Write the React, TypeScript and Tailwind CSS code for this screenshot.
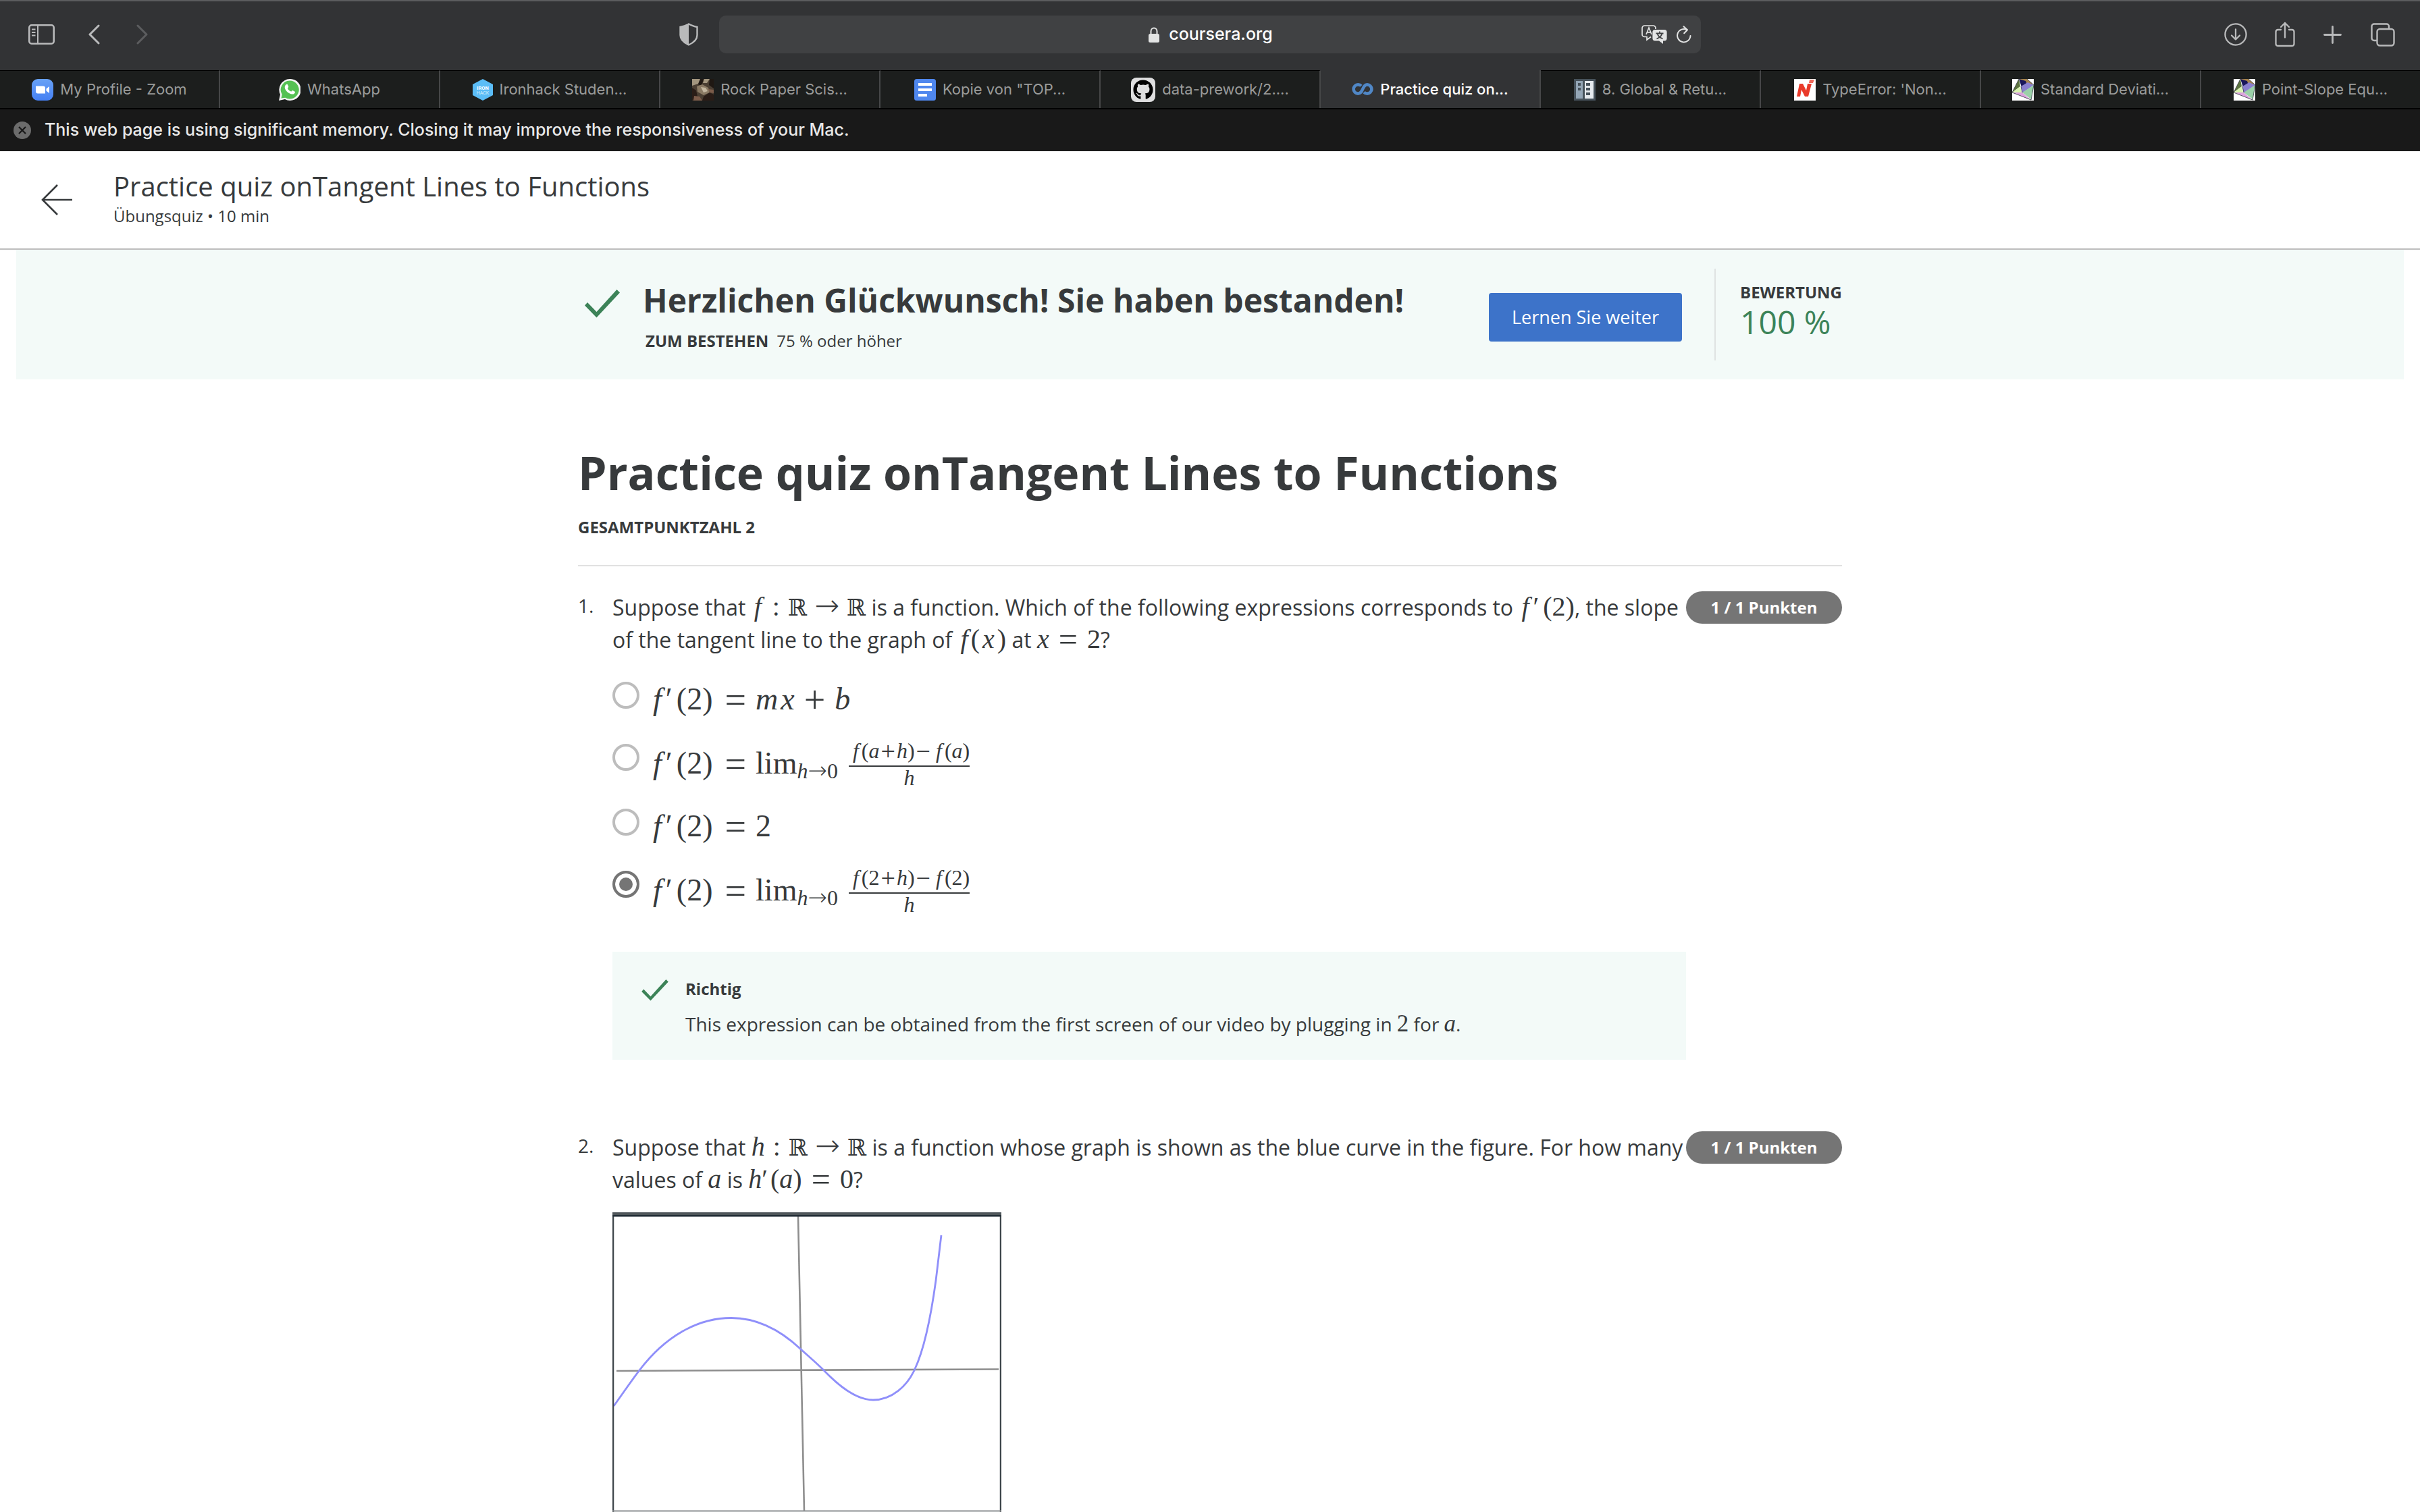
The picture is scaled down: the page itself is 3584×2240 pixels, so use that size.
import type { ReactNode } from "react";
import { FaGithub } from "react-icons/fa";

const serif = "font-['Liberation_Serif','DejaVu_Serif',serif]";

/* ---------- browser chrome ---------- */

function SidebarIcon() {
  return (
    <svg viewBox="0 0 39 30" className="h-[30px] w-[39px]" fill="none" stroke="#b9babb" strokeWidth="2.6">
      <rect x="1.3" y="1.3" width="36.4" height="27.4" rx="3.5" />
      <path d="M14 1v28M5 7.5h5.500M5 12h5.500M5 16.500h5.500" strokeWidth="2" />
    </svg>
  );
}

function Chevron({ forward }: { forward?: boolean }) {
  return (
    <svg
      viewBox="0 0 17 30"
      className="h-[30px] w-[17px]"
      fill="none"
      stroke={forward ? "#5c5d5f" : "#b9babb"}
      strokeWidth="3"
      strokeLinecap="round"
      strokeLinejoin="round"
    >
      <path d={forward ? "M2 2l13 13L2 28" : "M15 2L2 15l13 13"} />
    </svg>
  );
}

function ShieldIcon() {
  return (
    <svg viewBox="0 0 28 34" className="h-[34px] w-7">
      <path d="M14 1.500C10 4 6 5 1.500 6v12c0 6 5 11 12.500 14.500z" fill="#b9babb" />
      <path d="M14 1.500C18 4 22 5 26.500 6v12c0 6-5 11-12.500 14.500C6.500 29 1.500 24 1.500 18V6C6 5 10 4 14 1.500z" fill="none" stroke="#b9babb" strokeWidth="2.4" />
    </svg>
  );
}

function LockIcon() {
  return (
    <svg viewBox="0 0 16 23" className="h-[23px] w-4">
      <rect x="0" y="10" width="16" height="13" rx="2.5" fill="#e3e4e4" />
      <path d="M3.500 11V6.500a4.500 5 0 0 1 9 0V11" fill="none" stroke="#e3e4e4" strokeWidth="2" />
    </svg>
  );
}

function TranslateIcon() {
  return (
    <svg viewBox="0 0 38 28" className="h-7 w-[38px]" fill="none">
      <path d="M14 17.500l-6 4.500v-4.500H4.500A3.500 3.500 0 0 1 1 14V4.500A3.500 3.500 0 0 1 4.500 1h13A3.500 3.500 0 0 1 21 4.500V6" stroke="#e3e4e4" strokeWidth="1.700" />
      <path d="M7 14l4-10 4 10M8.300 10.800h5.400" stroke="#e3e4e4" strokeWidth="1.700" />
      <path d="M20 7h14a3.600 3.600 0 0 1 3.600 3.600v9.200a3.600 3.600 0 0 1-3.600 3.600h-2V28l-6-4.600h-6a3.600 3.600 0 0 1-3.600-3.600v-9.200A3.600 3.600 0 0 1 20 7z" fill="#e3e4e4" />
      <path d="M27 9.500v2.500M21.500 12.500h11M30.500 12.500c-1 4-4 6.500-8 8M23.500 12.500c1 4 4 6.500 8 8" stroke="#404143" strokeWidth="1.800" />
    </svg>
  );
}

function ReloadIcon() {
  return (
    <svg viewBox="0 0 22 26" className="h-[26px] w-[22px]" fill="none" stroke="#e3e4e4" strokeWidth="2" strokeLinecap="round" strokeLinejoin="round">
      <path d="M20.500 15A9.700 9.700 0 1 1 15.500 6.200M10.500 1.200L16 6.200l-4.800 5" />
    </svg>
  );
}

function DownloadIcon() {
  return (
    <svg viewBox="0 0 34 34" className="h-[34px] w-[34px]" fill="none" stroke="#b9babb" strokeWidth="2.300" strokeLinecap="round" strokeLinejoin="round">
      <circle cx="17" cy="17" r="15.600" />
      <path d="M17 9.500V24M11 18.500l6 6 6-6" />
    </svg>
  );
}

function ShareIcon() {
  return (
    <svg viewBox="0 0 30 38" className="h-[38px] w-[30px]" fill="none" stroke="#b9babb" strokeWidth="2.300" strokeLinecap="round" strokeLinejoin="round">
      <path d="M9 12H4.500A3 3 0 0 0 1.500 15v18a3.200 3.200 0 0 0 3 3h21a3.200 3.200 0 0 0 3-3V15a3 3 0 0 0-3-3H21" />
      <path d="M15 23.500V2M9 8l6-6 6 6" />
    </svg>
  );
}

function PlusIcon() {
  return (
    <svg viewBox="0 0 27 27" className="h-[27px] w-[27px]" stroke="#b9babb" strokeWidth="2.800" strokeLinecap="round">
      <path d="M13.500 1.500v24M1.500 13.500h24" />
    </svg>
  );
}

function TabsIcon() {
  return (
    <svg viewBox="0 0 36 35" className="h-[35px] w-9" fill="none" stroke="#b9babb" strokeWidth="2.400">
      <rect x="9.500" y="9" width="25" height="24.500" rx="4" />
      <path d="M9.500 26H5a3.500 3.500 0 0 1-3.500-3.500V5A3.500 3.500 0 0 1 5 1.500h18.500A3.500 3.500 0 0 1 27 5v4" />
    </svg>
  );
}

/* ---------- favicons ---------- */

const zoomIcon = (
  <svg viewBox="0 0 32 32" className="h-8 w-8">
    <defs>
      <linearGradient id="zoomBlue" x1="0" y1="0" x2="0" y2="1">
        <stop offset="0" stopColor="#68a1f5" />
        <stop offset="1" stopColor="#4580f3" />
      </linearGradient>
    </defs>
    <rect width="32" height="32" rx="9" fill="url(#zoomBlue)" />
    <path d="M6 10.500h11a3 3 0 0 1 3 3v8H9a3 3 0 0 1-3-3zM21.500 14.500l4.500-3.500v10l-4.500-3.500z" fill="#fff" />
  </svg>
);

const whatsappIcon = (
  <svg viewBox="0 0 32 32" className="h-8 w-8">
    <path d="M16 0a16 16 0 1 1-7 30L0 32l2-9A16 16 0 0 1 16 0z" fill="#f4f4f4" />
    <path d="M16 2.500a13.500 13.500 0 1 1-6.500 25.200L3.500 28.500l1.200-5.500A13.500 13.500 0 0 1 16 2.500z" fill="#55c153" />
    <path d="M10.500 8.500c1-1 2.300-.8 2.800.4l1 2.500c.2.600-1.300 2-1.300 2.500.8 2 2.700 3.800 5 4.700.7.200 1.700-1.900 2.500-1.600l2.800 1.400c1 .6.700 2-.3 3-1.800 1.700-4.500 1.500-7.500-.1-3-1.700-5.500-4.300-6.500-7.400-.6-2.200-.1-4 1.500-5.400z" fill="#fff" />
  </svg>
);

const ironhackIcon = (
  <svg viewBox="0 0 30 32" className="h-8 w-[30px]">
    <path d="M15 0l15 8v16l-15 8-15-8V8z" fill="#5bbdf7" />
    <text x="15" y="15.500" textAnchor="middle" fontSize="7.500" fontWeight="700" fill="#fff" fontFamily="Roboto, sans-serif">IRON</text>
    <text x="15" y="22.500" textAnchor="middle" fontSize="7" fill="#d9effd" fontFamily="Roboto, sans-serif">HACK</text>
  </svg>
);

const photoIcon = (
  <svg viewBox="0 0 32 32" className="h-8 w-8">
    <rect width="32" height="32" fill="#4b3f33" />
    <path d="M0 0h12l-3 7-9 3zM18 0h8l-4 6h-6z" fill="#a3967f" />
    <path d="M12 0h5l-3 10-5-2zM26 0h6v14l-7-5z" fill="#1f1813" />
    <path d="M7 11l8-3 9 5 2 7-9 4-9-5z" fill="#8a7a64" />
    <path d="M13 12l7 1 3 5-6 2z" fill="#c4b7a0" />
    <path d="M0 13l6 4 2 9-8 6zM17 26l9-6 6 3v9H15z" fill="#2a1d17" />
    <path d="M3 25l8 1 4 6H2zM24 15l8 1v5l-6-1z" fill="#7c5c4a" />
  </svg>
);

const docsIcon = (
  <svg viewBox="0 0 32 32" className="h-8 w-8">
    <rect width="32" height="32" rx="3.500" fill="#4f87ee" />
    <path d="M6 6h20v4H6zM6 14h20v4H6zM6 22h13v4H6z" fill="#fff" />
  </svg>
);

const githubIcon = (
  <span className="flex h-9 w-9 items-center justify-center rounded-lg bg-[#dededf]">
    <FaGithub className="h-[30px] w-[30px] text-black" />
  </span>
);

const courseraIcon = (
  <svg viewBox="0 0 32 18" className="h-[18px] w-8" fill="none" stroke="#5087c6" strokeWidth="4.600">
    <path d="M14 4.300C12.800 3 11.200 2.400 9.200 2.400a6.600 6.600 0 0 0 0 13.200c8 0 6-13.200 13.600-13.200a6.600 6.600 0 0 1 0 13.200c-2 0-3.600-.7-4.800-2" />
  </svg>
);

const booksIcon = (
  <svg viewBox="0 0 32 32" className="h-8 w-8">
    <rect width="32" height="32" fill="#47525b" />
    <path d="M3 3h10v26H3z" fill="#93a5b5" />
    <path d="M16 3h13v26H16z" fill="#e6eaee" />
    <path d="M6 6h4v4H6zM6 13h4v4H6zM18 6h6v4h-6zM18 13h6v4h-6zM18 20h6v4h-6z" fill="#47525b" />
  </svg>
);

const netIcon = (
  <svg viewBox="0 0 32 32" className="h-8 w-8">
    <rect width="32" height="32" fill="#fff" />
    <path d="M4 26L8 7h5l5 10 2-10h6l-5 19h-5l-5-10-2 10z" fill="#e93a2a" />
    <path d="M23 1h7l-2 5h-6z" fill="#ee6a5c" />
  </svg>
);

const gemIcon = (
  <svg viewBox="0 0 32 32" className="h-8 w-8">
    <rect width="32" height="32" fill="#fff" />
    <path d="M10 0h12l9 8-12 0z" fill="#a5824b" />
    <path d="M10 0l10 3 2 6-8 3z" fill="#19165a" />
    <path d="M10 0L0 20l12-9z" fill="#5d7440" />
    <path d="M0 20l12-9 2 9z" fill="#d9f5b0" />
    <path d="M13 11l10-6 9 4-17 12z" fill="#8a80cf" />
    <path d="M32 9l-4 21-13-10z" fill="#9ad0a8" />
    <path d="M0 20h15l13 11z" fill="#dba4dd" />
    <path d="M10 0L0 20l28 11 4-22-10-9M13 11l2 9" fill="none" stroke="#2f3440" strokeWidth=".8" />
  </svg>
);

const tabs: { label: string; icon: ReactNode; active?: boolean }[] = [
  { label: "My Profile - Zoom", icon: zoomIcon },
  { label: "WhatsApp", icon: whatsappIcon },
  { label: "Ironhack Studen...", icon: ironhackIcon },
  { label: "Rock Paper Scis...", icon: photoIcon },
  { label: 'Kopie von "TOP...', icon: docsIcon },
  { label: "data-prework/2....", icon: githubIcon },
  { label: "Practice quiz on...", icon: courseraIcon, active: true },
  { label: "8. Global & Retu...", icon: booksIcon },
  { label: "TypeError: 'Non...", icon: netIcon },
  { label: "Standard Deviati...", icon: gemIcon },
  { label: "Point-Slope Equ...", icon: gemIcon },
];

function BrowserChrome() {
  return (
    <header className="font-[Inter,sans-serif]">
      <div className="grid h-[104px] grid-cols-[1fr_1454px_1fr] items-center border-t-2 border-[#5b5c5e] bg-[#323335] pb-1">
        <div className="flex items-center pr-[31px] pl-[42px]">
          <button aria-label="Sidebar"><SidebarIcon /></button>
          <button aria-label="Back" className="ml-[50px]"><Chevron /></button>
          <button aria-label="Forward" className="ml-[54px]"><Chevron forward /></button>
          <button aria-label="Privacy report" className="ml-auto"><ShieldIcon /></button>
        </div>
        <div className="flex h-14 items-center rounded-[10px] bg-[#404143] pr-[14px]">
          <div className="w-[90px]" />
          <div className="flex flex-1 items-center justify-center gap-[14px]">
            <LockIcon />
            <span className="text-[25px] font-medium text-white">coursera.org</span>
          </div>
          <button aria-label="Translate"><TranslateIcon /></button>
          <button aria-label="Reload" className="ml-[14px]"><ReloadIcon /></button>
        </div>
        <div className="flex items-center justify-end pr-[37px]">
          <button aria-label="Downloads"><DownloadIcon /></button>
          <button aria-label="Share" className="ml-[41px]"><ShareIcon /></button>
          <button aria-label="New tab" className="ml-[42px]"><PlusIcon /></button>
          <button aria-label="Tab overview" className="ml-[43px]"><TabsIcon /></button>
        </div>
      </div>
      <nav className="flex h-[58px] border-b-2 border-black bg-[#1c1e1d]">
        {tabs.map((tab) => (
          <button
            key={tab.label}
            className={
              tab.active
                ? "flex flex-1 items-center justify-center gap-[10px] border-r-2 border-[#464748] bg-[#323335] text-[22px] font-medium whitespace-nowrap text-white"
                : "flex flex-1 items-center justify-center gap-[10px] border-t border-r-2 border-t-black border-r-[#464748] text-[22px] whitespace-nowrap text-[#9b9c9b] last:border-r-0"
            }
          >
            {tab.icon}
            <span>{tab.label}</span>
          </button>
        ))}
      </nav>
      <div className="flex h-[62px] items-center gap-5 bg-[#191919] pl-5">
        <button aria-label="Dismiss">
          <svg viewBox="0 0 26 26" className="h-[26px] w-[26px]">
            <circle cx="13" cy="13" r="13" fill="#6c6c6c" />
            <path d="M8 8l10 10M18 8L8 18" stroke="#191919" strokeWidth="2.200" />
          </svg>
        </button>
        <p className="text-[25px] font-medium text-[#e8e8e8]">
          This web page is using significant memory. Closing it may improve the responsiveness of your Mac.
        </p>
      </div>
    </header>
  );
}

/* ---------- math ---------- */

function M({ children }: { children: ReactNode }) {
  return <span className={`${serif} text-[40px] leading-none whitespace-nowrap`}>{children}</span>;
}

/* Relation or sum sign inside running text. */
function InlineOp({ children }: { children: ReactNode }) {
  return <span className="mx-3.5 align-[-4px] text-[50px] leading-0">{children}</span>;
}

/* Relation or sum sign in an answer. */
function DisplayOp({ children }: { children: ReactNode }) {
  return <span className="mx-3.5 align-[-5px] text-[56px] leading-0">{children}</span>;
}

/* Sum sign inside a fraction. */
function SmallOp({ children }: { children: ReactNode }) {
  return <span className="mx-[2px] align-[-3px] text-[38px] leading-0">{children}</span>;
}

function FPrime2() {
  return (
    <>
      <i className="mr-1.5">f</i>′<span className="ml-1.5">(2)</span>
    </>
  );
}

function RealsToReals() {
  return (
    <>
      <span className="mx-3">:</span>
      <span className="font-['DejaVu_Serif',serif] text-[34px] leading-0">ℝ</span>
      <span className="mx-[11px] font-['DejaVu_Sans',sans-serif] text-[44px] leading-0 font-extralight">→</span>
      <span className="font-['DejaVu_Serif',serif] text-[34px] leading-0">ℝ</span>
    </>
  );
}

function Option({ id, checked, tall, children }: { id: string; checked?: boolean; tall?: boolean; children: ReactNode }) {
  return (
    <div className={tall ? "flex h-24 items-start" : "flex h-[92px] items-start"}>
      <input
        type="radio"
        id={id}
        name="q1"
        defaultChecked={checked}
        className="mt-1 h-10 w-10 shrink-0 appearance-none rounded-full border-4 border-[#bdbdbd] bg-white checked:border-[#757575] checked:bg-[#757575] checked:shadow-[inset_0_0_0_6px_white]"
      />
      <label htmlFor={id} className={`${serif} ml-5 block text-[46px] leading-[60px] whitespace-nowrap`}>
        <FPrime2 />
        <span className="ml-1" />
        <DisplayOp>=</DisplayOp>
        {children}
      </label>
    </div>
  );
}

function Limit({ point }: { point: ReactNode }) {
  return (
    <>
      lim
      <sub className="bottom-[-7px] text-[32px]">
        <i>h</i>
        <span className="font-['DejaVu_Sans',sans-serif] text-[34px] leading-0 font-extralight">→</span>0
      </sub>
      <span className="ml-4 inline-flex flex-col items-stretch text-center align-middle text-[32px]">
        <span className="border-b-2 border-[#373a3c] pb-2 leading-7">
          <i className="mr-1 ml-1.5">f</i>({point}
          <SmallOp>+</SmallOp>
          <i>h</i>)<SmallOp>−</SmallOp>
          <i className="mr-1 ml-1.5">f</i>({point})
        </span>
        <span className="pb-1 leading-8">
          <i>h</i>
        </span>
      </span>
    </>
  );
}

/* ---------- quiz ---------- */

function Check({ className }: { className: string }) {
  return (
    <svg viewBox="0 0 52 42" className={className}>
      <path d="M0 23.500L4 19l13.500 14L47.500 0l4.500 4.500L17.500 41.500z" fill="#3c8358" />
    </svg>
  );
}

function Question({ number, prompt, children }: { number: number; prompt: ReactNode; children: ReactNode }) {
  return (
    <li className="flex items-start">
      <span className="w-[51px] shrink-0 text-[28px] leading-[42px]">{number}.</span>
      <div className="min-w-0 flex-1">
        <p className="text-[32px] leading-[48px]">{prompt}</p>
        {children}
      </div>
      <span className="flex h-12 w-[231px] shrink-0 items-center justify-center rounded-full bg-[#757575] text-[24px] font-bold text-white">
        1 / 1 Punkten
      </span>
    </li>
  );
}

function Graph() {
  return (
    <svg viewBox="0 0 576 444" className="mt-6 block h-[444px] w-[576px]" fill="none" role="img" aria-label="Graph of h">
      <path d="M275 6L284 443" stroke="#8e8e8e" strokeWidth="2.600" />
      <path d="M6 235L572 232.500" stroke="#8e8e8e" strokeWidth="2.600" />
      <path
        d="M2 287C15 269 27 251 40 234C78 184 126 156.500 176 156.500C214 156.500 248 174 278 202C290 213 300 221 312 233C334 256 360 278 386 278C414 278 437 257 448 232C462 202 472 152 479 101L487 34"
        stroke="#8f8ffa"
        strokeWidth="2.800"
      />
      <path d="M1 0V444M575 0V444" stroke="#3c4449" strokeWidth="2.500" />
      <path d="M0 442.500H576" stroke="#8a8e90" strokeWidth="2" />
      <rect width="576" height="4" fill="#4f565a" />
      <rect y="4" width="576" height="2.500" fill="#222d36" />
    </svg>
  );
}

export default function App() {
  return (
    <div className="h-screen overflow-hidden bg-white font-['Open_Sans',sans-serif] text-[#373a3c]">
      <BrowserChrome />

      <div className="flex h-[146px] items-center border-b-2 border-[#bdbdbd] pl-[61px]">
        <button aria-label="Zurück">
          <svg viewBox="0 0 46 46" className="h-[46px] w-[46px]" fill="none" stroke="#373a3c" strokeWidth="2.600">
            <path d="M46 23H2M24 1L2 23l22 22" />
          </svg>
        </button>
        <div className="ml-[61px]">
          <p className="text-[40px] leading-[48px]">Practice quiz onTangent Lines to Functions</p>
          <p className="text-[24px] leading-10">Übungsquiz • 10 min</p>
        </div>
      </div>

      <section className="mx-6 bg-[#f3faf8]">
        <div className="mx-auto flex h-48 w-full max-w-[1872px] items-start">
          <Check className="mt-[59px] ml-[10px] h-[42px] w-[52px]" />
          <div className="mt-[43px] ml-[34px]">
            <h2 className="text-[48px] leading-[64px] font-bold">Herzlichen Glückwunsch! Sie haben bestanden!</h2>
            <p className="mt-[10px] ml-1 text-[24px] leading-9">
              <b className="mr-3">ZUM BESTEHEN</b>75 % oder höher
            </p>
          </div>
          <button className="mt-16 ml-auto h-[72px] w-[286px] rounded bg-[#3d73c9] text-[27px] text-white">Lernen Sie weiter</button>
          <div className="mt-7 ml-12 h-[136px] border-l-2 border-[#dfe3e2] pl-9">
            <p className="mt-[17px] text-[24px] leading-9 font-bold">BEWERTUNG</p>
            <p className="text-[48px] leading-[52px] text-[#3c8358]">100 %</p>
          </div>
        </div>
      </section>

      <main className="mx-auto w-full max-w-[1872px]">
        <h1 className="mt-[90px] text-[68px] leading-[96px] font-bold">Practice quiz onTangent Lines to Functions</h1>
        <p className="mt-[15px] border-b-2 border-[#e1e1e1] pb-[38px] text-[24px] leading-9 font-bold">GESAMTPUNKTZAHL 2</p>

        <ol className="mt-[37px] flex flex-col gap-[106px]">
          <Question
            number={1}
            prompt={
              <>
                Suppose that <M><i className="mx-1">f</i><RealsToReals /></M>{" "}
                is a function. Which of the following expressions corresponds to <M><i className="ml-1" /><FPrime2 /></M>
                <span>, the slope</span> <span>of the tangent line to the graph of</span>{" "}
                <M><i className="mx-1">f</i>(<i className="mx-1">x</i>)</M> at <M><i>x</i><InlineOp>=</InlineOp>2</M>?
              </>
            }
          >
            <fieldset className="mt-[34px]">
              <Option id="q1a">
                <i className="mr-1">m</i><i>x</i><DisplayOp>+</DisplayOp><i>b</i>
              </Option>
              <Option id="q1b" tall><Limit point={<i>a</i>} /></Option>
              <Option id="q1c">2</Option>
              <Option id="q1d" tall checked><Limit point="2" /></Option>
            </fieldset>
            <div className="mt-7 flex h-40 items-start bg-[#f3faf8] pt-[37px] pl-[42px]">
              <Check className="mt-1 h-8 w-[42px]" />
              <div className="ml-6">
                <p className="text-[24px] leading-9 font-bold">Richtig</p>
                <p className="mt-[10px] text-[28px] leading-[48px]">
                  This expression can be obtained from the first screen of our video by plugging in{" "}
                  <span className={`${serif} text-[35px] leading-none`}>2</span> for{" "}
                  <i className={`${serif} text-[35px] leading-none`}>a</i>.
                </p>
              </div>
            </div>
          </Question>

          <Question
            number={2}
            prompt={
              <>
                Suppose that <M><i>h</i><RealsToReals /></M>{" "}
                <span>is a function whose graph is shown as the blue curve in the figure. For how many</span>{" "}
                <span>values of</span> <M><i>a</i></M> is{" "}
                <M><i>h</i>′<span className="ml-1">(<i>a</i>)</span><InlineOp>=</InlineOp>0</M>?
              </>
            }
          >
            <Graph />
          </Question>
        </ol>
      </main>
    </div>
  );
}
